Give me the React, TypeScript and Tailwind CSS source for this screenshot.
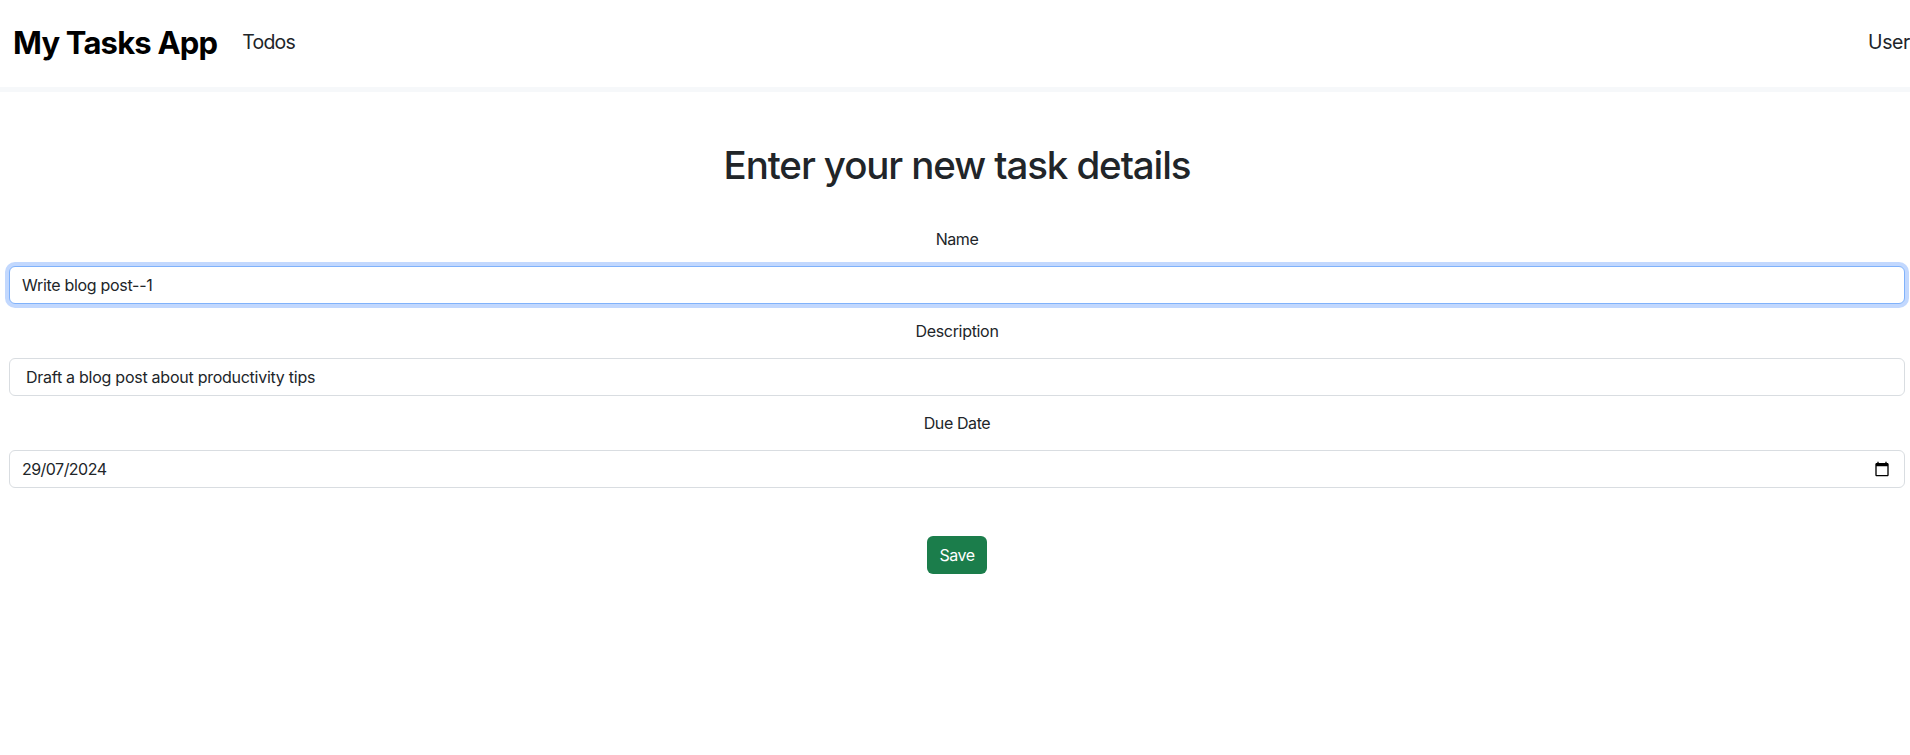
function CalendarIcon() {
  return (
    <svg className="mr-0.5 mb-px h-4 w-4 shrink-0" viewBox="0 0 24 24" fill="#000" aria-hidden="true">
      <path d="M20 3h-1V1h-2v2H7V1H5v2H4c-1.1 0-2 .9-2 2v16c0 1.1.9 2 2 2h16c1.1 0 2-.9 2-2V5c0-1.1-.9-2-2-2zm0 18H4V8h16v13z" />
    </svg>
  );
}

const field =
  "flex h-[38px] w-full items-center justify-between rounded-md border bg-white px-3 text-left text-base leading-6";

export default function App() {
  return (
    <div className="min-h-[755px] overflow-hidden bg-white font-['Inter','Liberation_Sans',sans-serif] text-[#212529]">
      <header className="flex h-[92px] items-center border-b-[5px] border-[#f6f8fa] pl-[13px]">
        <a className="pb-0.5 text-[31px] leading-[48px] font-bold tracking-[-0.8px] whitespace-nowrap text-black">My Tasks App</a>
        <nav className="flex flex-1 justify-between pl-[25px] text-[19.5px] leading-[30px]">
          <a className="pb-[3px] tracking-[-0.8px]">Todos</a>
          <a className="pb-[3px] tracking-[-0.4px]">User</a>
        </nav>
      </header>
      <main className="flex flex-col pt-[49px] pr-[5px] pl-[9px] text-center">
        <h1 className="text-[38.5px] leading-[48px] font-medium tracking-[-1.1px]">Enter your new task details</h1>
        <form className="mt-[38px] flex flex-col items-center">
          <label className="mb-[15px] leading-6 tracking-[-0.45px]">Name</label>
          <div className={`${field} border-[#80b2fb] shadow-[0_0_0_4px_#c2d8fe]`}>
            <span className="tracking-[-0.3px]">Write blog post--1</span>
          </div>
          <label className="mt-[15px] mb-[15px] leading-6 tracking-[-0.32px]">Description</label>
          <div className={`${field} border-[#d9dde1]`}>
            <span className="pl-1 tracking-[-0.26px]">Draft a blog post about productivity tips</span>
          </div>
          <label className="mt-[15px] mb-[15px] leading-6 tracking-[-0.4px]">Due Date</label>
          <div className={`${field} border-[#d9dde1]`}>
            <span className="tracking-[-0.53px]">29/07/2024</span>
            <CalendarIcon />
          </div>
          <button
            type="button"
            className="mt-12 h-[38px] w-[60px] rounded-md bg-[#1b7d4b] leading-6 tracking-[-0.5px] text-white"
          >
            Save
          </button>
        </form>
      </main>
    </div>
  );
}
